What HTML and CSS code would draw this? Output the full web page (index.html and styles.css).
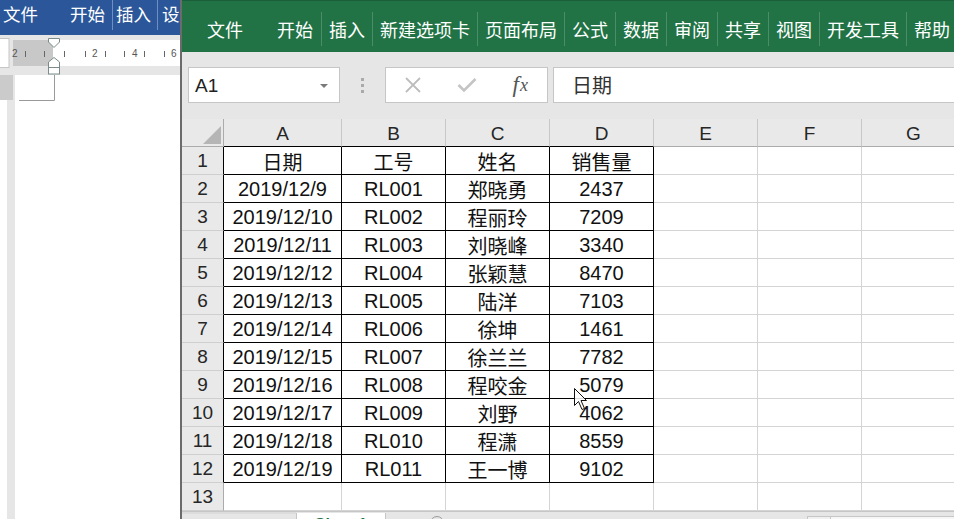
FILE: index.html
```html
<!DOCTYPE html>
<html lang="zh-CN">
<head>
<meta charset="utf-8">
<title>Excel</title>
<link rel="stylesheet" href="styles.css">
</head>
<body>
<div class="screen">
  <div class="word">
    <div class="w-title">
      <span class="wtab w1">文件</span>
      <span class="wtab w2">开始</span>
      <span class="wtab w3">插入</span>
      <span class="wtab w4">设</span>
    </div>
    <svg class="w-ruler" width="180" height="40" viewBox="0 0 180 40">
      <rect x="0" y="0" width="180" height="40" fill="#e6e6e6"/>
      <rect x="-1" y="3.5" width="10" height="29" fill="#fff" stroke="#c6c6c6"/>
      <rect x="13" y="5" width="40" height="26" fill="#c8c8c8"/>
      <rect x="53" y="5" width="127" height="26" fill="#fff"/>
      <g stroke="#666" stroke-width="1">
        <line x1="25.5" y1="16" x2="25.5" y2="22"/>
        <line x1="44.5" y1="16" x2="44.5" y2="22"/>
        <line x1="64.5" y1="16" x2="64.5" y2="22"/>
        <line x1="85.5" y1="16" x2="85.5" y2="22"/>
        <line x1="105.5" y1="16" x2="105.5" y2="22"/>
        <line x1="124.5" y1="16" x2="124.5" y2="22"/>
        <line x1="144.5" y1="16" x2="144.5" y2="22"/>
        <line x1="164.5" y1="16" x2="164.5" y2="22"/>
      </g>
      <g class="rnum" fill="#555">
        <text x="12" y="22">2</text>
        <text x="92" y="22">2</text>
        <text x="132" y="22">4</text>
        <text x="171" y="22">6</text>
      </g>
      <g fill="#fff" stroke="#7b8b8b" stroke-width="1">
        <polygon points="48.5,3.5 59.5,3.5 59.5,7 54,12.5 48.5,7"/>
        <polygon points="54,22.5 59.5,27 59.5,32.5 48.5,32.5 48.5,27"/>
        <rect x="48.5" y="32.5" width="11" height="6.5"/>
      </g>
    </svg>
    <div class="w-body">
      <div class="vruler"><div class="vr-top"></div></div>
      <div class="page">
        <svg class="corner" width="45" height="27" viewBox="0 0 45 27">
          <path d="M39.5 0 V25.5 H4" fill="none" stroke="#9a9a9a" stroke-width="1"/>
        </svg>
      </div>
    </div>
  </div>

  <div class="excel">
    <div class="ribbon">
      <span class="rtab first">文件</span>
      <span class="rtab home">开始</span>
      <span class="rtab">插入</span>
      <span class="rtab">新建选项卡</span>
      <span class="rtab">页面布局</span>
      <span class="rtab">公式</span>
      <span class="rtab">数据</span>
      <span class="rtab">审阅</span>
      <span class="rtab">共享</span>
      <span class="rtab">视图</span>
      <span class="rtab">开发工具</span>
      <span class="rtab">帮助</span>
      <span class="rtab"></span>
    </div>

    <div class="fbar">
      <div class="namebox">
        <span class="nb-text">A1</span>
        <svg class="nb-arrow" width="8" height="4" viewBox="0 0 8 4"><polygon points="0,0 8,0 4,4" fill="#7a7a7a"/></svg>
      </div>
      <div class="grip"><i></i><i></i><i></i></div>
      <div class="fbtns">
        <span class="fbtn">
          <svg width="18" height="18" viewBox="0 0 18 18"><path d="M2 2 L16 16 M16 2 L2 16" stroke="#bdbdbd" stroke-width="1.8" fill="none"/></svg>
        </span>
        <span class="fbtn">
          <svg width="20" height="18" viewBox="0 0 20 18"><path d="M1.5 9 L7 14.5 L18.5 3" stroke="#c4c4c4" stroke-width="2.6" fill="none"/></svg>
        </span>
        <span class="fbtn fx"><i>f</i><i class="x">x</i></span>
      </div>
      <div class="finput">日期</div>
    </div>

    <div class="grid">
      <div class="corner-cell"><svg width="22" height="22" viewBox="0 0 22 22"><polygon points="20,2 20,20 2,20" fill="#b5b5b5"/></svg></div>
      <div class="ch tb">A</div><div class="ch tb">B</div><div class="ch tb">C</div><div class="ch tb">D</div><div class="ch">E</div><div class="ch">F</div><div class="ch">G</div>

      <div class="rh tb">1</div><div class="c t">日期</div><div class="c t">工号</div><div class="c t">姓名</div><div class="c t">销售量</div><div class="c"></div><div class="c"></div><div class="c"></div>
      <div class="rh tb">2</div><div class="c t">2019/12/9</div><div class="c t">RL001</div><div class="c t">郑晓勇</div><div class="c t">2437</div><div class="c"></div><div class="c"></div><div class="c"></div>
      <div class="rh tb">3</div><div class="c t">2019/12/10</div><div class="c t">RL002</div><div class="c t">程丽玲</div><div class="c t">7209</div><div class="c"></div><div class="c"></div><div class="c"></div>
      <div class="rh tb">4</div><div class="c t">2019/12/11</div><div class="c t">RL003</div><div class="c t">刘晓峰</div><div class="c t">3340</div><div class="c"></div><div class="c"></div><div class="c"></div>
      <div class="rh tb">5</div><div class="c t">2019/12/12</div><div class="c t">RL004</div><div class="c t">张颖慧</div><div class="c t">8470</div><div class="c"></div><div class="c"></div><div class="c"></div>
      <div class="rh tb">6</div><div class="c t">2019/12/13</div><div class="c t">RL005</div><div class="c t">陆洋</div><div class="c t">7103</div><div class="c"></div><div class="c"></div><div class="c"></div>
      <div class="rh tb">7</div><div class="c t">2019/12/14</div><div class="c t">RL006</div><div class="c t">徐坤</div><div class="c t">1461</div><div class="c"></div><div class="c"></div><div class="c"></div>
      <div class="rh tb">8</div><div class="c t">2019/12/15</div><div class="c t">RL007</div><div class="c t">徐兰兰</div><div class="c t">7782</div><div class="c"></div><div class="c"></div><div class="c"></div>
      <div class="rh tb">9</div><div class="c t">2019/12/16</div><div class="c t">RL008</div><div class="c t">程咬金</div><div class="c t">5079</div><div class="c"></div><div class="c"></div><div class="c"></div>
      <div class="rh tb">10</div><div class="c t">2019/12/17</div><div class="c t">RL009</div><div class="c t">刘野</div><div class="c t">4062</div><div class="c"></div><div class="c"></div><div class="c"></div>
      <div class="rh tb">11</div><div class="c t">2019/12/18</div><div class="c t">RL010</div><div class="c t">程潇</div><div class="c t">8559</div><div class="c"></div><div class="c"></div><div class="c"></div>
      <div class="rh tb">12</div><div class="c t">2019/12/19</div><div class="c t">RL011</div><div class="c t">王一博</div><div class="c t">9102</div><div class="c"></div><div class="c"></div><div class="c"></div>
      <div class="rh">13</div><div class="c"></div><div class="c"></div><div class="c"></div><div class="c"></div><div class="c"></div><div class="c"></div><div class="c"></div>
    </div>

    <div class="sheets">
      <div class="snav"></div>
      <div class="stab">Sheet1</div>
      <div class="splus"></div>
      <div class="sspace"></div>
      <div class="sbox"></div>
      <div class="strack"></div>
    </div>
  </div>

  <svg class="cursor" width="14" height="24" viewBox="0 0 14 24">
    <path d="M0.5 0.5 V17.5 L4.5 13.5 L8 21.5 L10.5 20.5 L7 12.5 H12.5 Z" fill="#fff" fill-opacity="0.85" stroke="#111" stroke-width="1"/>
  </svg>
</div>
</body>
</html>
```

FILE: styles.css
```css
html, body {
  margin: 0;
  padding: 0;
  background: #fff;
}

body {
  width: 954px;
  height: 519px;
  overflow: hidden;
  font-family: "Liberation Sans", "Noto Sans CJK SC", sans-serif;
}

.screen {
  position: relative;
  display: flex;
  width: 954px;
  height: 519px;
  overflow: hidden;
}

/* ---------- Word window (left) ---------- */
.word {
  width: 180px;
  flex: none;
  display: flex;
  flex-direction: column;
  background: #e6e6e6;
  overflow: hidden;
}

.w-title {
  height: 35px;
  flex: none;
  background: #2b579a;
  display: flex;
  align-items: flex-start;
  color: #fff;
  font-family: "Noto Sans CJK SC", sans-serif;
  font-size: 17.5px;
  white-space: nowrap;
}

.wtab {
  height: 30px;
  line-height: 27px;
  flex: none;
}

.w1 { margin-left: 3px; }
.w2 { margin-left: 32px; }
.w3 { margin-left: 7px; padding-left: 3px; border-left: 1px solid #6f8fc2; }
.w4 { margin-left: 6px; padding-left: 4px; border-left: 1px solid #6f8fc2; }

.w-ruler {
  display: block;
  flex: none;
}

.rnum {
  font-family: "Liberation Sans", sans-serif;
  font-size: 10px;
}

.w-body {
  flex: 1;
  display: flex;
  gap: 2px;
}

.vruler {
  width: 13px;
  flex: none;
  background: linear-gradient(to right, #fff 0 7px, #e6e6e6 7px 13px);
}

.vr-top {
  height: 25px;
  background: #cbcbcb;
}

.page {
  flex: 1;
  background: #fff;
}

.corner {
  display: block;
}

/* ---------- Excel window ---------- */
.excel {
  flex: 1;
  min-width: 0;
  display: flex;
  flex-direction: column;
  border-left: 2px solid #6b6b6b;
  background: #e6e6e6;
  overflow: hidden;
}

.ribbon {
  height: 52px;
  flex: none;
  box-sizing: border-box;
  border-top: 1px solid #1a5f3a;
  background: #217346;
  display: flex;
  align-items: flex-start;
  padding-top: 11px;
  color: #fff;
  font-family: "Noto Sans CJK SC", sans-serif;
  font-size: 18px;
  white-space: nowrap;
}

.rtab {
  flex: none;
  height: 34px;
  line-height: 34px;
  padding: 0 7px 0 7px;
  border-left: 1px solid #4b8d68;
}

.rtab.first {
  border-left: none;
  padding: 0;
  margin-left: 25px;
}

.rtab.home {
  border-left: none;
  padding: 0 8px 0 0;
  margin-left: 34px;
}

/* formula bar */
.fbar {
  height: 67px;
  flex: none;
  box-sizing: border-box;
  padding-top: 15px;
  display: flex;
  align-items: flex-start;
}

.namebox {
  margin-left: 6px;
  width: 152px;
  height: 36px;
  flex: none;
  box-sizing: border-box;
  border: 1px solid #c6c6c6;
  background: #fff;
  display: flex;
  align-items: center;
  justify-content: space-between;
  padding: 1px 11px 0 6px;
  font-size: 19px;
  color: #222;
}

.nb-arrow {
  display: block;
}

.grip {
  width: 45px;
  height: 36px;
  flex: none;
  display: flex;
  flex-direction: column;
  align-items: center;
  justify-content: center;
  gap: 3px;
}

.grip i {
  display: block;
  width: 3px;
  height: 3px;
  background: #aaa;
}

.fbtns {
  width: 163px;
  height: 36px;
  flex: none;
  box-sizing: border-box;
  border: 1px solid #c6c6c6;
  background: #fff;
  display: flex;
}

.fbtn {
  width: 54px;
  display: flex;
  align-items: center;
  justify-content: center;
}

.fbtn svg {
  display: block;
}

.fx {
  font-family: "Liberation Serif", serif;
  font-size: 23px;
  color: #555;
  font-style: italic;
}

.fx i.x {
  font-size: 18px;
  margin-left: 1px;
}

.finput {
  margin-left: 5px;
  flex: 1;
  height: 36px;
  box-sizing: border-box;
  border: 1px solid #c6c6c6;
  border-right: none;
  background: #fff;
  padding-left: 18px;
  line-height: 33px;
  font-family: "Noto Sans CJK SC", sans-serif;
  font-size: 20px;
  color: #333;
}

/* grid */
.grid {
  flex: none;
  display: grid;
  grid-template-columns: 42px 118px repeat(6, 104px);
  grid-auto-rows: 28px;
  background: #fff;
}

.grid > div {
  box-sizing: border-box;
  border-right: 1px solid #d4d4d4;
  border-bottom: 1px solid #d4d4d4;
  display: flex;
  align-items: center;
  justify-content: center;
  white-space: nowrap;
  overflow: hidden;
}

.corner-cell {
  background: #e9e9e9;
  align-items: flex-end !important;
  justify-content: flex-end !important;
  border-right-color: #ababab !important;
  border-bottom-color: #ababab !important;
}

.corner-cell svg {
  display: block;
}

.ch {
  background: #e9e9e9;
  border-right-color: #c8c8c8 !important;
  border-bottom-color: #ababab !important;
  color: #262626;
  font-size: 19px;
  padding-top: 2px;
}

.ch.tb {
  border-bottom-color: #000 !important;
}

.rh {
  background: #e9e9e9;
  border-right-color: #ababab !important;
  border-bottom-color: #cfcfcf !important;
  color: #262626;
  font-size: 19px;
  padding-top: 1px;
}

.rh.tb {
  border-right-color: #000 !important;
}

.c {
  font-size: 20px;
  color: #111;
  padding-top: 2px;
}

.c.t {
  border-right-color: #000 !important;
  border-bottom-color: #000 !important;
}

/* sheet tabs */
.sheets {
  flex: 1;
  box-sizing: border-box;
  border-top: 1px solid #c6c6c6;
  background: #e6e6e6;
  display: flex;
  overflow: hidden;
}

.snav {
  width: 114px;
  flex: none;
  border-top: 2px solid #dcdcdc;
}

.stab {
  width: 90px;
  flex: none;
  box-sizing: border-box;
  border-left: 1px solid #c6c6c6;
  border-right: 1px solid #c6c6c6;
  background: #fff;
  margin-top: 1px;
  color: #217346;
  font-weight: bold;
  font-size: 16px;
  line-height: 20px;
  padding-top: 2px;
  text-align: center;
}

.splus {
  width: 12px;
  height: 12px;
  flex: none;
  margin: 4px 0 0 44px;
  border: 1px solid #9a9a9a;
  border-radius: 50%;
}

.sspace {
  width: 363px;
  flex: none;
}

.sbox {
  width: 24px;
  flex: none;
  margin-top: 4px;
  box-sizing: border-box;
  border: 1px solid #c6c6c6;
  border-bottom: none;
  background: #f0f0f0;
}

.strack {
  flex: 1;
  margin-top: 4px;
  border-top: 1px solid #c6c6c6;
  background: #f6f6f6;
}

/* mouse cursor overlay */
.cursor {
  position: absolute;
  left: 574px;
  top: 388px;
}
```
